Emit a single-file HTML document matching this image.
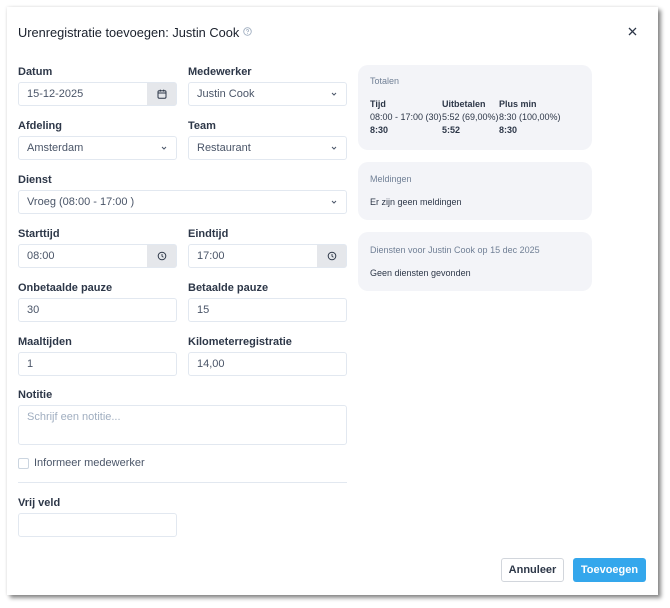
<!DOCTYPE html>
<html><head><meta charset="utf-8"><style>
*{box-sizing:border-box;margin:0;padding:0}
body{width:670px;height:608px;background:#fff;font-family:"Liberation Sans",sans-serif;color:#2d3748;position:relative;overflow:hidden}
.modal{position:absolute;left:7px;top:7px;width:651px;height:588px;background:#fff;box-shadow:3px 3px 4px rgba(0,0,0,.45),0 0 3px rgba(0,0,0,.12)}
.a{position:absolute}
.lbl{position:absolute;font-size:11px;font-weight:bold;color:#2d3748;margin-top:1px}
.in{position:absolute;height:24px;border:1px solid #e2e8f0;border-radius:3px;background:#fff;font-size:11px;color:#4a5568;padding:0 8px;line-height:22px}
.add{position:absolute;right:0;top:0;bottom:0;width:29px;background:#e5e7eb;display:flex;align-items:center;justify-content:center}
.chev{position:absolute;right:8px;top:7px}
.card{position:absolute;left:351px;width:234px;background:#f3f4f8;border-radius:10px;font-size:9px;color:#2d3748}
.card .h{position:absolute;left:12px;color:#718096}
.btn{position:absolute;height:24px;border-radius:3px;font-size:11px;font-weight:bold;display:flex;align-items:center;justify-content:center}
</style></head><body>
<div class="modal">
<div class="a" style="left:11px;top:18px;font-size:12.8px;color:#1a202c">Urenregistratie toevoegen: Justin Cook</div>
<svg class="a" style="left:236px;top:20px" width="9" height="9" viewBox="0 0 10 10"><circle cx="5" cy="5" r="4.2" fill="none" stroke="#a0aec0" stroke-width="1"/><path d="M3.8 4a1.2 1.2 0 1 1 1.6 1.1c-.4.2-.4.4-.4.8" fill="none" stroke="#a0aec0" stroke-width=".9"/><circle cx="5" cy="7.2" r=".5" fill="#a0aec0"/></svg>
<svg class="a" style="left:621px;top:20px" width="9" height="9" viewBox="0 0 9 9"><path d="M1 1L8 8M8 1L1 8" stroke="#2d3748" stroke-width="1.3"/></svg>

<div class="lbl" style="left:11px;top:58px">Datum</div>
<div class="in" style="left:11px;top:75px;width:159px">15-12-2025<div class="add"><svg width="10" height="10" viewBox="0 0 10 10"><rect x="1" y="1.8" width="8" height="7.4" rx="1.2" fill="none" stroke="#2d3748" stroke-width="1"/><path d="M1 4h8M3.3.6v2M6.7.6v2" stroke="#2d3748" stroke-width="1"/></svg></div></div>
<div class="lbl" style="left:181px;top:58px">Medewerker</div>
<div class="in" style="left:181px;top:75px;width:159px">Justin Cook<svg class="chev" width="8" height="8" viewBox="0 0 8 8"><path d="M2 3l2 2 2-2" fill="none" stroke="#4a5568"/></svg></div>

<div class="lbl" style="left:11px;top:112px">Afdeling</div>
<div class="in" style="left:11px;top:129px;width:159px">Amsterdam<svg class="chev" width="8" height="8" viewBox="0 0 8 8"><path d="M2 3l2 2 2-2" fill="none" stroke="#4a5568"/></svg></div>
<div class="lbl" style="left:181px;top:112px">Team</div>
<div class="in" style="left:181px;top:129px;width:159px">Restaurant<svg class="chev" width="8" height="8" viewBox="0 0 8 8"><path d="M2 3l2 2 2-2" fill="none" stroke="#4a5568"/></svg></div>

<div class="lbl" style="left:11px;top:166px">Dienst</div>
<div class="in" style="left:11px;top:183px;width:329px">Vroeg (08:00 - 17:00 )<svg class="chev" width="8" height="8" viewBox="0 0 8 8"><path d="M2 3l2 2 2-2" fill="none" stroke="#4a5568"/></svg></div>

<div class="lbl" style="left:11px;top:220px">Starttijd</div>
<div class="in" style="left:11px;top:237px;width:159px">08:00<div class="add"><svg width="10" height="10" viewBox="0 0 10 10"><circle cx="5" cy="5" r="3.8" fill="none" stroke="#2d3748"/><path d="M5 3v2.2l1.4 1" fill="none" stroke="#2d3748" stroke-width=".9"/></svg></div></div>
<div class="lbl" style="left:181px;top:220px">Eindtijd</div>
<div class="in" style="left:181px;top:237px;width:159px">17:00<div class="add"><svg width="10" height="10" viewBox="0 0 10 10"><circle cx="5" cy="5" r="3.8" fill="none" stroke="#2d3748"/><path d="M5 3v2.2l1.4 1" fill="none" stroke="#2d3748" stroke-width=".9"/></svg></div></div>

<div class="lbl" style="left:11px;top:274px">Onbetaalde pauze</div>
<div class="in" style="left:11px;top:291px;width:159px">30</div>
<div class="lbl" style="left:181px;top:274px">Betaalde pauze</div>
<div class="in" style="left:181px;top:291px;width:159px">15</div>

<div class="lbl" style="left:11px;top:328px">Maaltijden</div>
<div class="in" style="left:11px;top:345px;width:159px">1</div>
<div class="lbl" style="left:181px;top:328px">Kilometerregistratie</div>
<div class="in" style="left:181px;top:345px;width:159px">14,00</div>

<div class="lbl" style="left:11px;top:381px">Notitie</div>
<div class="in" style="left:11px;top:398px;width:329px;height:40px;color:#a0aec0;line-height:22px">Schrijf een notitie...</div>
<div class="a" style="left:11px;top:451px;width:11px;height:11px;border:1px solid #cbd5e0;border-radius:2px"></div>
<div class="a" style="left:27px;top:450px;font-size:11px;color:#4a5568">Informeer medewerker</div>
<div class="a" style="left:11px;top:475px;width:329px;height:1px;background:#e2e8f0"></div>

<div class="lbl" style="left:11px;top:489px">Vrij veld</div>
<div class="in" style="left:11px;top:506px;width:159px"></div>

<div class="card" style="top:58px;height:85px">
<div class="h" style="top:11px">Totalen</div>
<div class="a" style="left:12px;top:34px;font-weight:bold">Tijd</div>
<div class="a" style="left:12px;top:47px">08:00 - 17:00 (30)</div>
<div class="a" style="left:12px;top:60px;font-weight:bold">8:30</div>
<div class="a" style="left:84px;top:34px;font-weight:bold">Uitbetalen</div>
<div class="a" style="left:84px;top:47px">5:52 (69,00%)</div>
<div class="a" style="left:84px;top:60px;font-weight:bold">5:52</div>
<div class="a" style="left:141px;top:34px;font-weight:bold">Plus min</div>
<div class="a" style="left:141px;top:47px">8:30 (100,00%)</div>
<div class="a" style="left:141px;top:60px;font-weight:bold">8:30</div>
</div>
<div class="card" style="top:155px;height:58px">
<div class="h" style="top:12px">Meldingen</div>
<div class="a" style="left:12px;top:35px">Er zijn geen meldingen</div>
</div>
<div class="card" style="top:225px;height:59px">
<div class="h" style="top:13px">Diensten voor Justin Cook op 15 dec 2025</div>
<div class="a" style="left:12px;top:36px">Geen diensten gevonden</div>
</div>

<div class="btn" style="left:494px;top:551px;width:63px;border:1px solid #d2d6dc;color:#2d3748">Annuleer</div>
<div class="btn" style="left:566px;top:551px;width:73px;background:#34a7ec;color:#fff">Toevoegen</div>
</div>
</body></html>
